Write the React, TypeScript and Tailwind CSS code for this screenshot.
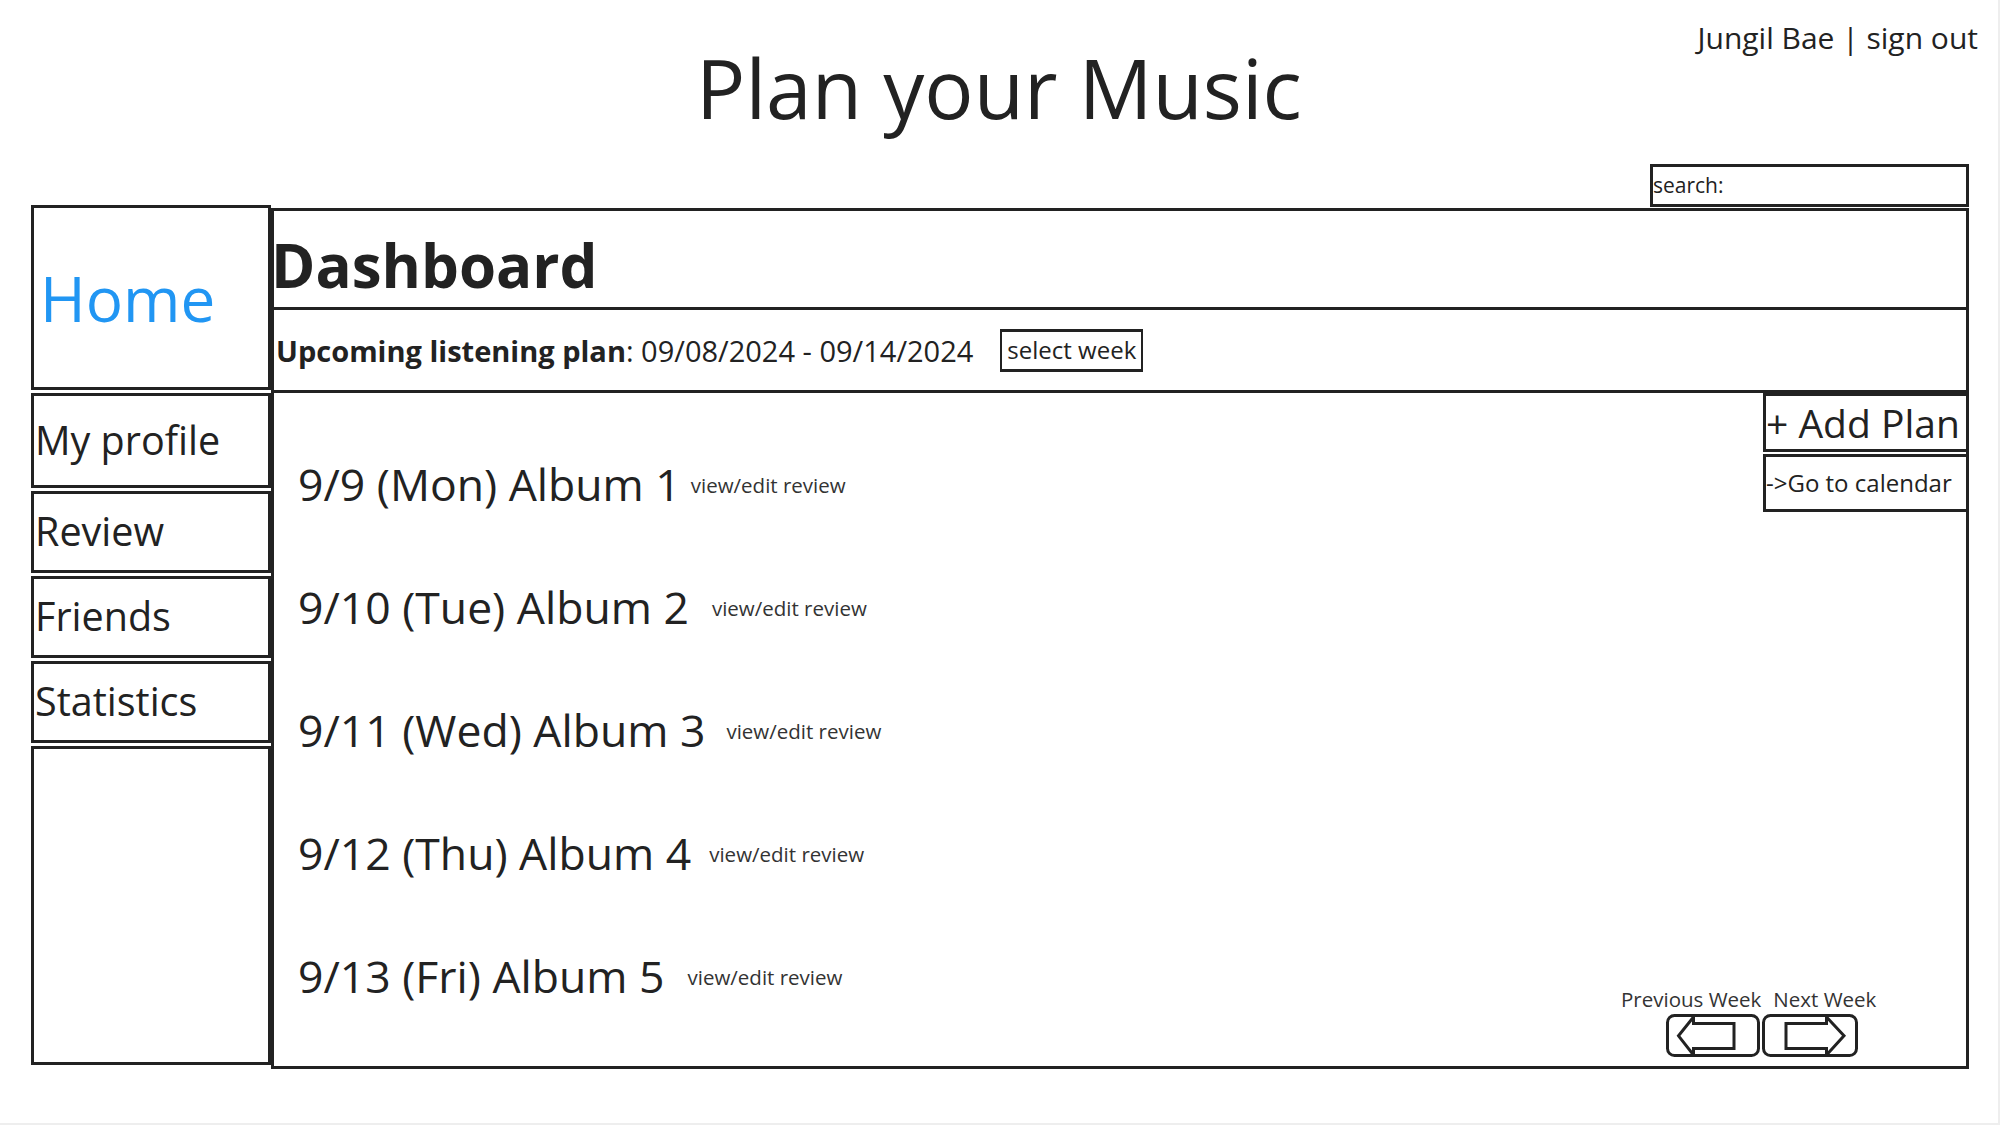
import React from "react";

const plans = [
  { label: "9/9 (Mon) Album 1", gap: "ml-[10px]" },
  { label: "9/10 (Tue) Album 2", gap: "ml-[23px]" },
  { label: "9/11 (Wed) Album 3", gap: "ml-[21px]" },
  { label: "9/12 (Thu) Album 4", gap: "ml-[18px]" },
  { label: "9/13 (Fri) Album 5", gap: "ml-[23px]" },
];

const menu = [
  { label: "My profile", h: "h-[95px]" },
  { label: "Review", h: "h-[82px]" },
  { label: "Friends", h: "h-[82px]" },
  { label: "Statistics", h: "h-[82px]" },
];

const PrevArrow = () => (
  <svg width="94" height="43" viewBox="0 0 94 43" fill="none" stroke="#222" strokeWidth="3">
    <rect x="1.5" y="1.5" width="91" height="40" rx="7" />
    <path d="M68 9.5 H27.5 V3 L12.5 21.8 L27.5 41 V34.5 H68 Z" strokeLinejoin="miter" />
  </svg>
);

const NextArrow = () => (
  <svg width="96" height="43" viewBox="0 0 96 43" fill="none" stroke="#222" strokeWidth="3">
    <rect x="1.5" y="1.5" width="93" height="40" rx="7" />
    <path d="M24 9.5 H64.5 V3 L82 21.8 L64.5 41 V34.5 H24 Z" strokeLinejoin="miter" />
  </svg>
);

export default function App() {
  return (
    <div className="w-[2000px] h-[1125px] bg-white border-r-2 border-b-2 border-[#eeeeee] font-['Open_Sans',sans-serif] text-[#222]">
      {/* header */}
      <div className="grid grid-cols-[1fr_auto_1fr] h-[164px]">
        <div />
        <h1 className="pt-[46px] text-[82px] leading-none font-normal">Plan your Music</h1>
        <div className="justify-self-end pt-[23px] pr-[20px] text-[30px] leading-none whitespace-nowrap">
          Jungil Bae | sign out
        </div>
      </div>

      <div className="flex pl-[31px] pr-[29px]">
        {/* sidebar */}
        <div className="w-[240px] mt-[41px] mb-[4px] flex flex-col gap-[3px]">
          <div className="h-[185px] border-[3px] border-[#222] flex items-center pl-[6px] text-[62px] leading-none text-[#2196f3]">
            Home
          </div>
          {menu.map((m) => (
            <div key={m.label} className={`${m.h} border-[3px] border-[#222] flex items-center pl-[1px] text-[39.5px] leading-none`}>
              {m.label}
            </div>
          ))}
          <div className="flex-1 border-[3px] border-[#222]" />
        </div>

        {/* right side */}
        <div className="flex-1 flex flex-col">
          <div className="self-end w-[319px] h-[43px] border-[3px] border-[#222] flex items-center text-[21px] leading-none">
            search:
          </div>
          <div className="mt-[1px] border-[3px] border-[#222]">
            <div className="h-[99px] pt-[24px] border-b-[3px] border-[#222] text-[60px] leading-none font-bold">
              <span className="-ml-[3px]">Dashboard</span>
            </div>
            <div className="h-[83px] border-b-[3px] border-[#222] flex items-center text-[29px] leading-none">
              <span className="pl-[2px]">
                <b className="font-bold">Upcoming listening plan</b>: 09/08/2024 - 09/14/2024
              </span>
              <span className="ml-[27px] h-[43px] border-y-[3px] border-x-2 border-[#222] flex items-center px-[5px] text-[24px] leading-none">
                select week
              </span>
            </div>
            <div className="h-[673px] flex">
              <div className="flex-1 pt-[66px] pl-[24px] flex flex-col gap-[73px]">
                {plans.map((p) => (
                  <div key={p.label} className="flex items-baseline h-[50px] whitespace-nowrap">
                    <span className="text-[44.5px] leading-[50px]">{p.label}</span>
                    <span className={`${p.gap} relative -top-[8px] text-[20.5px] text-[#333]`}>view/edit review</span>
                  </div>
                ))}
              </div>
              <div className="w-[345px] flex flex-col items-end">
                <div className="w-[203px] h-[59px] border-l-[3px] border-y-[3px] border-[#222] flex items-center text-[39px] leading-none whitespace-nowrap">
                  + Add Plan
                </div>
                <div className="mt-[2px] w-[203px] h-[58px] border-l-[3px] border-y-[3px] border-[#222] flex items-center text-[24px] leading-none whitespace-nowrap">
                  -&gt;Go to calendar
                </div>
                <div className="mt-auto mr-[93px] pb-[9px] w-[252px]">
                  <div className="flex text-[20.5px] leading-[24px] text-[#333] whitespace-nowrap">
                    <span>Previous Week</span>
                    <span className="ml-[12px]">Next Week</span>
                  </div>
                  <div className="mt-[3px] pl-[45px] flex gap-[2px]">
                    <PrevArrow />
                    <NextArrow />
                  </div>
                </div>
              </div>
            </div>
          </div>
        </div>
      </div>
    </div>
  );
}
